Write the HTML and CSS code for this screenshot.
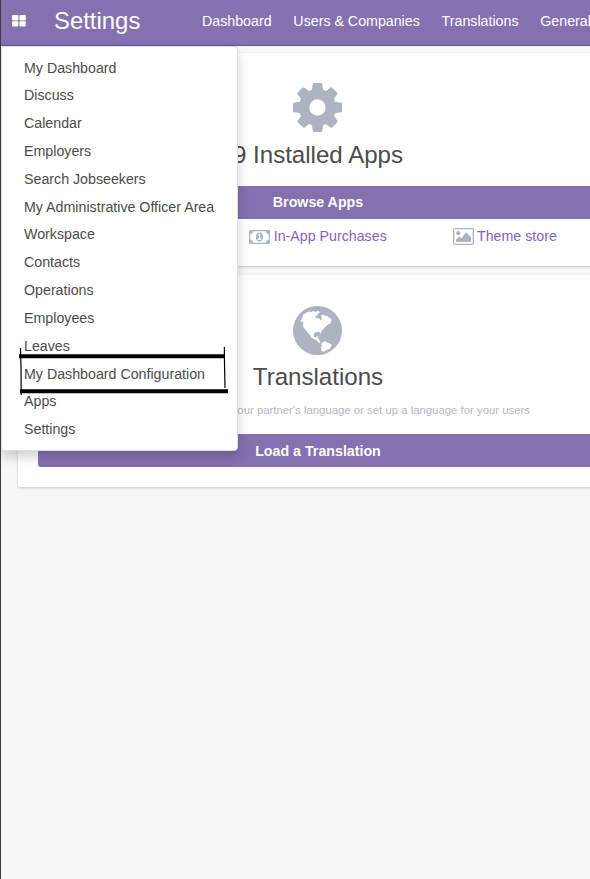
FILE: index.html
```html
<!DOCTYPE html>
<html lang="en">
<head>
<meta charset="utf-8">
<title>Settings</title>
<link rel="stylesheet" href="styles.css">
</head>
<body>
<div class="app">
  <header class="navbar">
    <svg class="apps-icon" viewBox="0 0 14 12"><rect width="6.4" height="5.4" rx="1"/><rect x="7.4" width="6.4" height="5.4" rx="1"/><rect y="6.2" width="6.4" height="5.4" rx="1"/><rect x="7.4" y="6.2" width="6.4" height="5.4" rx="1"/></svg>
    <div class="brand">Settings</div>
    <nav class="sections"><a>Dashboard</a><a>Users &amp; Companies</a><a>Translations</a><a>General</a></nav>
    <div class="menu">
      <a>My Dashboard</a><a>Discuss</a><a>Calendar</a><a>Employers</a><a>Search Jobseekers</a><a>My Administrative Officer Area</a><a>Workspace</a><a>Contacts</a><a>Operations</a><a>Employees</a><a>Leaves</a><a>My Dashboard Configuration</a><a>Apps</a><a>Settings</a>
      <svg class="marker" viewBox="0 0 212 50"><path d="M2 11.2H208" stroke-width="4"/><path d="M3 46.2H211" stroke-width="4"/><path d="M3.5 3L4 22L4.2 50M207.4 2V12L208 43" stroke-width="1.2"/></svg>
    </div>
  </header>
  <main class="content">
    <section class="card">
      <svg class="hero" viewBox="0 128 1536 1536"><path d="M1024 896q0-106-75-181t-181-75-181 75-75 181 75 181 181 75 181-75 75-181zm512-109v222q0 12-8 23t-20 13l-185 28q-19 54-39 91 35 50 107 138 10 12 10 25t-9 23q-27 37-99 108t-94 71q-12 0-26-9l-138-108q-44 23-91 38-16 136-29 186-7 28-36 28h-222q-14 0-24.500-8.500t-11.500-21.500l-28-184q-49-16-90-37l-141 107q-10 9-25 9-14 0-25-11-126-114-165-168-7-10-7-23 0-12 8-23 15-21 51-66.500t54-70.500q-27-50-41-99l-183-27q-13-2-21-12.500t-8-23.500v-222q0-12 8-23t19-13l186-28q14-46 39-92-40-57-107-138-10-12-10-24 0-10 9-23 26-36 98.500-107.500t94.500-71.500q13 0 26 10l138 107q44-23 91-38 16-136 29-186 7-28 36-28h222q14 0 24.500 8.500t11.500 21.500l28 184q49 16 90 37l142-107q9-9 24-9 13 0 25 10 129 119 165 170 7 8 7 22 0 12-8 23-15 21-51 66.500t-54 70.500q26 50 41 98l183 28q13 2 21 12.500t8 23.500z"/></svg>
      <h2>9 Installed Apps</h2>
      <a class="button apps-button">Browse Apps</a>
      <div class="links">
        <a class="purchases"><svg class="money" viewBox="0 0 21 14"><path fill-rule="evenodd" d="M1 0H20Q21 0 21 1V13Q21 14 20 14H1Q0 14 0 13V1Q0 0 1 0ZM4.300 1.300Q4 3.800 1.300 4.200V9.800Q4 10.200 4.300 12.700H16.700Q17 10.200 19.700 9.800V4.200Q17 3.800 16.700 1.300Z"/><ellipse cx="10.500" cy="7" rx="3.600" ry="4.500"/><path class="cut" d="M8.800 5.200L10.400 3.800H11.300V8.800H12.500V10H8.800V8.800H10V5.500L9.300 6Z"/></svg>In-App Purchases</a>
        <a><svg class="picture" viewBox="0 0 21 17"><rect class="frame" x=".7" y=".7" width="19.600" height="15.600" rx="1.200"/><circle cx="5.200" cy="5.200" r="2.100"/><path d="M3 14V11.500L6.300 8.200L8.300 10.200L13.200 4.300L18 9.300V14Z"/></svg>Theme store</a>
      </div>
    </section>
    <section class="card languages">
      <svg class="hero" viewBox="190 33 147 147"><circle cx="263.500" cy="106.500" r="73.500"/><path class="cut" d="M213 76L218 68L220 59L229 54L238 49L244 52L250 48L257 51L265 47L271 52L266 55L263 60L257 64L259 69L268 70L273 76L276 74L276 68L274 64L275 60L283 59L288 64L294 62L298 68L305 72L306 78L301 80L305 83L297 88L289 94L286 97L282 102L275 109L274 117L271 113L267 110L259 111L253 116L252 124L257 128L262 126L265 122L266 128L263 130L269 135L271 141L276 144L285 139L291 142L300 145L307 151L303 156L299 163L289 165L283 170L275 168L274 159L277 151L273 146L265 142L262 136L252 132L245 128L241 120L233 111L229 106L223 99L219 91L222 83L218 79L213 82Z"/><path d="M270 142L277 142L275 149Z"/></svg>
      <h2>Translations</h2>
      <p>Send your documents in your partner's language or set up a language for your users</p>
      <a class="button">Load a Translation</a>
    </section>
  </main>
</div>
</body>
</html>
```
FILE: styles.css
```css
* { box-sizing: border-box; }
body { margin: 0; overflow: hidden; font: 14.22px/21px "Liberation Sans", Arial, sans-serif; color: #4c4c4c; background: #f7f7f7; }
.app { width: 590px; height: 879px; overflow: hidden; border-left: 1px solid #403c3a; }
.navbar { position: relative; display: flex; align-items: center; height: 46px; padding: 0 0 4px 11px; background: #8570b0; border-bottom: 1px solid #6450a0; color: #fff; white-space: nowrap; }
.apps-icon { width: 14px; height: 12px; flex: none; fill: #fff; }
.brand { flex: none; margin-left: 28px; width: 148px; font-size: 23.9px; }
.sections { display: flex; gap: 21.8px; padding-top: 2px; }
.menu { position: absolute; z-index: 2; top: 46px; left: 0; width: 237px; height: 405px; padding: 7.53px 0 0; background: #fff; border: 1px solid #dedede; border-radius: 4px; box-shadow: 0 6px 12px rgba(0, 0, 0, .18); color: #4c4c4c; }
.menu a { display: block; height: 27.83px; padding-left: 22px; line-height: 27px; }
.marker { position: absolute; left: 15px; top: 298px; width: 212px; height: 50px; fill: none; stroke: #000; }
.content { width: 617px; padding: 7px 0 0 17px; }
.card { display: flex; flex-direction: column; align-items: center; width: 600px; height: 213px; padding: 30px 20px 20px; margin-bottom: 9px; background: #fff; border-radius: 2px; box-shadow: 0 1px 3px rgba(0, 0, 0, .2); }
.languages { height: 212px; }
.hero { width: 49px; height: 49px; flex: none; margin: 0 1px 1px 0; }
.languages .hero { margin: 1px 1px 0 0; }
.card svg { fill: #adb4c0; }
.card .cut { fill: #fff; }
h2 { margin: 6px 0 0; font-size: 24.1px; line-height: 32px; font-weight: 400; }
.button { display: block; width: 100%; height: 33px; flex: none; background: #8570b0; border-radius: 3px; color: #fff; font-weight: 700; line-height: 33px; text-align: center; }
.languages .button { line-height: 34px; }
.apps-button { margin-top: 15px; }
.links { display: grid; grid-template-columns: repeat(3, 1fr); width: 100%; margin-top: 7px; color: #8366b5; }
.links a { display: flex; align-items: center; justify-content: center; gap: 3.5px; }
.purchases { grid-column: 2; }
.money { width: 21px; height: 14px; }
.picture { width: 21px; height: 17px; }
.card .frame { fill: none; stroke: #adb4c0; stroke-width: 1.3; }
p { margin: 8px 0 15px; font-size: 11.36px; line-height: 18px; color: #b5b8c2; white-space: nowrap; }
```
